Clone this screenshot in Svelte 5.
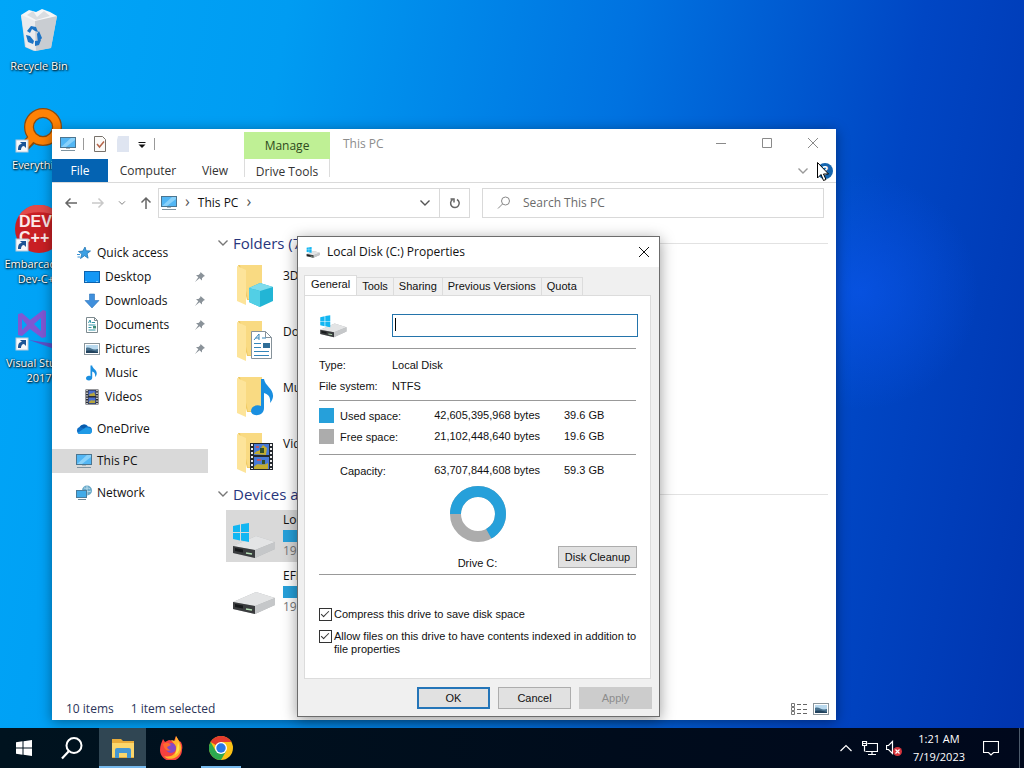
<script>
    const quickAccess = [
        { label: 'Desktop', icon: 'desktop', pinned: true },
        { label: 'Downloads', icon: 'download', pinned: true },
        { label: 'Documents', icon: 'document', pinned: true },
        { label: 'Pictures', icon: 'picture', pinned: true },
        { label: 'Music', icon: 'music', pinned: false },
        { label: 'Videos', icon: 'video', pinned: false }
    ];

    const places = [
        { label: 'OneDrive', icon: 'cloud' },
        { label: 'This PC', icon: 'pc', selected: true },
        { label: 'Network', icon: 'network' }
    ];

    const shortcuts = [
        { label: 'Recycle Bin', icon: 'bin' },
        { label: 'Everything', icon: 'everything', link: true },
        { label: 'Embarcadero Dev-C++', icon: 'devcpp', link: true },
        { label: 'Visual Studio 2017', icon: 'vs', link: true }
    ];

    const folders = [
        { label: '3D Objects', icon: 'cube' },
        { label: 'Documents', icon: 'document' },
        { label: 'Music', icon: 'music' },
        { label: 'Videos', icon: 'video' }
    ];

    const drives = [
        { label: 'Local Disk (C:)', free: '19.6 GB free of 59.3 GB', used: 67, system: true, selected: true },
        { label: 'EFI (D:)', free: '19.6 MB free of 95.9 MB', used: 80 }
    ];

    const tabs = ['General', 'Tools', 'Sharing', 'Previous Versions', 'Quota'];

    let volumeName = '';
    let compress = true;
    let indexed = true;
    let search = '';
</script>

{#snippet glyph(name)}
    <svg class="glyph" viewBox="0 0 16 16" aria-hidden="true">
        {#if name === 'desktop'}
            <rect x="0.5" y="2.5" width="15" height="11" fill="#1497f5" stroke="#0c62ae" />
            <path d="M1 12.500h14" stroke="#7cc8fb" stroke-dasharray="2 9" />
        {:else if name === 'download'}
            <path d="M5.500 1h5v6.500H15L8 15 1 7.500h4.500z" fill="#3f8fdc" stroke="#2b73bb" stroke-width=".6" />
        {:else if name === 'document'}
            <path d="M2.500.5h8l3 3v12h-11z" fill="#fff" stroke="#7d8a8f" />
            <path d="M10.500.5v3h3" fill="none" stroke="#7d8a8f" />
            <path d="M4.500 6l1.500-3 1 3M8 5.500h3M4.500 8h7M4.500 10.500h3M4.500 13h7" fill="none" stroke="#2f93a5" />
            <rect x="9" y="9" width="3" height="2.500" fill="#3a8b76" />
        {:else if name === 'picture'}
            <rect x="0.5" y="2.500" width="15" height="11" fill="#fff" stroke="#8b969c" />
            <path d="M2 4h12v8H2z" fill="#b9d9ee" />
            <path d="M2 7c4-2 6 3 12 1v4H2z" fill="#47708d" />
            <path d="M2 10c4-1 8 0 12 1v1H2z" fill="#22435e" />
        {:else if name === 'music'}
            <path d="M6.500.5h1.700c.3 3.500 5 4 4.500 8.500-.2 1.500-1 2.500-1.700 3 .7-3-.8-5-2.800-5.500v6.200c0 3.500-6.200 3.500-6.200.5 0-2 2.500-3 4.500-2z" fill="#1a8fe0" />
        {:else if name === 'video'}
            <path d="M1.500.5h13v15h-13z" fill="#2a2d33" />
            <path d="M3 1v14M13 1v14" stroke="#e8e8e8" stroke-width="1.500" stroke-dasharray="1.300 1.300" />
            <path d="M4.500 1.500h7v5.500h-7zM4.500 8.500h7v6h-7z" fill="#4a6fd0" />
            <path d="M5 6c2-3 3 0 5-3l1.500 4h-6zM5 13c3-4 4 0 6-2v3H5z" fill="#b6a53a" />
        {:else if name === 'cloud'}
            <path d="M4 13a3.600 3.600 0 0 1-.5-7A5 5 0 0 1 12 5.500a3.800 3.800 0 0 1 1 7.500z" fill="#0f6fc6" />
            <path d="M1.500 12l8-5.500c3-.5 6.500 1 6.500 3.500 0 2-1.500 3-3 3H4c-1 0-2-.5-2.500-1z" fill="#1f9ae6" />
            <path d="M4 6q3-4 7-1l-3 2.500z" fill="#0a5aa8" />
        {:else if name === 'pc'}
            <rect x="0.5" y="1.500" width="15" height="10" fill="#52b6f4" stroke="#4b7590" />
            <path d="M1 11L11 2h4v2L6 11z" fill="#89d1fa" />
            <path d="M1 14.500h14" stroke="#7f939f" />
            <path d="M6 12.500h4" stroke="#a8b8c0" />
        {:else if name === 'network'}
            <circle cx="11" cy="5.500" r="5" fill="#6aa9c9" />
            <path d="M8 3c2 1 4-1 6 1M8 7c2-2 4 1 7-1M11 1v9" stroke="#b9dcec" fill="none" />
            <rect x="0.500" y="5.500" width="10" height="7" fill="#42abe8" stroke="#4a7c9b" />
            <path d="M2 14.500h8" stroke="#6f8794" />
        {:else if name === 'star'}
            <path d="M9 2l1.200 3.800 4.300.2-3.400 2.700 1 4.500-3.600-2.500L4.500 13.500l1.300-4.400L2.500 6.500l4.300-.4z" fill="#3da0e4" stroke="#2276b4" stroke-width=".8" />
            <path d="M1 9.500h3M1.500 12h2.500" stroke="#3b94d6" />
        {/if}
    </svg>
{/snippet}

{#snippet pin()}
    <svg class="pin" viewBox="0 0 12 12" aria-hidden="true">
        <path d="M6.500 1l4.500 4-1.300.5-1.700 1.700v2.300L5.500 7.300 1 11l3.300-4.800L2 4h2.500L6.300 2.300z" fill="#8a9299" />
    </svg>
{/snippet}

{#snippet drive(system)}
    <svg class="drive-icon" viewBox="0 0 48 40" aria-hidden="true">
        <path d="M2 25L25 15l19 6v7L24 37 2 32z" fill="#b3b5b7" />
        <path d="M2 25l23-10 19 6-20 8z" fill="#e3e4e5" />
        <path d="M24 29l20-8v7l-20 9z" fill="#c5c7c9" />
        <path d="M2 25l22 4v8L2 32z" fill="#3a3c3e" />
        <path d="M4 27l8 1.500v3L4 30z" fill="#17191b" />
        <path d="M15 32l6 1" stroke="#b5dfb5" stroke-width="1.500" />
        {#if system}
            <path d="M2 5l7-1.500V11H2zM10 3.300L18 2v9h-8zM2 12h7v7.500L2 18zM10 12h8v9l-8-1.400z" fill="#12b6f2" />
        {/if}
    </svg>
{/snippet}

{#snippet chevron()}
    <svg class="chevron" viewBox="0 0 12 12" aria-hidden="true">
        <path d="M1.500 3.500L6 8l4.500-4.500" fill="none" stroke="currentColor" stroke-width="1.400" />
    </svg>
{/snippet}

<div class="screen">
    <main class="desktop">
        <ul class="shortcuts">
            {#each shortcuts as item}
                <li>
                    <svg class="shortcut-icon" viewBox="0 0 48 48" aria-hidden="true">
                        {#if item.icon === 'bin'}
                            <path d="M6 8l36 1-6 32-17 3-9-4z" fill="#d5d8dc" />
                            <path d="M6 8l14 5 1 31-10-4z" fill="#e9ebee" />
                            <path d="M20 13l22-4-6 32-15 3z" fill="#c9cdd2" />
                            <path d="M6 8l8-5 7 2 6-3 8 3 7 4-22 5z" fill="#f5f6f7" />
                            <path d="M12 8l6-4 4 6 7-6 6 5-14 4z" fill="#d9dde1" />
                            <path d="M12 24l4-5 5 1 2 5-3-1-3-2-2 4zM22 27l2-3 3 7-4 5zM11 28l4 1 4 5-1 3-5-2zM20 34l6-1-2 5-4 1z" fill="#1c74c5" />
                        {:else if item.icon === 'everything'}
                            <path d="M19 31L9 41" stroke="#8c4a0c" stroke-width="10" />
                            <circle cx="28" cy="21" r="14" fill="none" stroke="#8c4a0c" stroke-width="10" />
                            <circle cx="28" cy="21" r="14" fill="none" stroke="#ff8205" stroke-width="7.500" />
                            <path d="M19 30L9 41" stroke="#ff8205" stroke-width="7" />
                        {:else if item.icon === 'devcpp'}
                            <circle cx="24" cy="24" r="24" fill="#c91f24" />
                            <path d="M3 12a24 24 0 0 1 42 0 50 50 0 0 0-42 0z" fill="#e14a4a" />
                            <text x="4" y="22" class="dev-text">DEV</text>
                            <text x="4" y="38" class="dev-text">C++</text>
                        {:else}
                            <path d="M3 10l4-1 8 7L28 6l3 1v26l-4 1-12-9-8 7-4-1zM26 14l-7 6 7 7zM7 15v11l5-5z" fill="#7f58d2" fill-rule="evenodd" />
                            <path d="M14 36l34 5v7z" fill="#5b50c8" />
                        {/if}
                        {#if item.link}
                            <rect x="1" y="34" width="12" height="12" fill="#f7f9fb" stroke="#b8c8d8" />
                            <path d="M3 44c0-4 1-6 4-6l-2-2h6v6l-2-2c-2 0-3 2-3 4z" fill="#1c5596" />
                        {/if}
                    </svg>
                    <span>{item.label}</span>
                </li>
            {/each}
        </ul>

        <section class="window explorer" aria-label="This PC">
            <header class="titlebar">
                <div class="quick-tools">
                    {@render glyph('pc')}
                    <i></i>
                    <svg class="glyph" viewBox="0 0 16 16" aria-hidden="true">
                        <path d="M3.500.5h8l3 3v12h-11z" fill="#fbfaf8" stroke="#77716b" />
                        <path d="M6 8l2.500 3L13 5.500" fill="none" stroke="#b5654a" stroke-width="1.500" />
                    </svg>
                    <svg class="glyph" viewBox="0 0 16 16" aria-hidden="true">
                        <path d="M4 0h11v16H3V4z" fill="#dfe5f1" />
                    </svg>
                    <svg class="glyph small" viewBox="0 0 10 10" aria-hidden="true">
                        <path d="M1.500 3.500h7" stroke="#111" />
                        <path d="M1.500 5.500h7L5 9z" fill="#111" />
                    </svg>
                    <i></i>
                </div>
                <div class="manage">Manage</div>
                <h1>This PC</h1>
                <div class="window-buttons">
                    <button aria-label="Minimize"><svg viewBox="0 0 12 12"><path d="M1 6.500h10" /></svg></button>
                    <button aria-label="Maximize"><svg viewBox="0 0 12 12"><path d="M1.500 1.500h9v9h-9z" /></svg></button>
                    <button aria-label="Close"><svg viewBox="0 0 12 12"><path d="M1 1l10 10M11 1L1 11" /></svg></button>
                </div>
            </header>

            <nav class="ribbon">
                <button class="file">File</button>
                <button class="computer">Computer</button>
                <button class="view">View</button>
                <button class="drive-tools">Drive Tools</button>
                <span class="ribbon-end">
                    {@render chevron()}
                    <button class="help" aria-label="Help">?</button>
                </span>
            </nav>

            <div class="navbar">
                <div class="history">
                    <button aria-label="Back"><svg viewBox="0 0 14 14"><path d="M13 7H2M6.500 2.500L2 7l4.500 4.500" /></svg></button>
                    <button aria-label="Forward" disabled><svg viewBox="0 0 14 14"><path d="M1 7h11M7.500 2.500L12 7l-4.500 4.500" /></svg></button>
                    <button class="recent" aria-label="Recent locations">{@render chevron()}</button>
                    <button aria-label="Up"><svg viewBox="0 0 14 14"><path d="M7 13V2M2.500 6.500L7 2l4.500 4.500" /></svg></button>
                </div>
                <div class="address">
                    {@render glyph('pc')}
                    <span class="crumb">›</span>
                    <span>This PC</span>
                    <span class="crumb">›</span>
                    <button class="drop" aria-label="Previous locations">{@render chevron()}</button>
                    <button class="refresh" aria-label="Refresh">
                        <svg viewBox="0 0 14 14"><path d="M9 3.500a4.300 4.300 0 1 1-4.500.2M2.500 3h3.500v3.500" /></svg>
                    </button>
                </div>
                <label class="search">
                    <svg viewBox="0 0 14 14" aria-hidden="true"><circle cx="8.500" cy="5" r="4" /><path d="M5.500 8L1 12.500" /></svg>
                    <input type="search" placeholder="Search This PC" aria-label="Search This PC" bind:value={search} />
                </label>
            </div>

            <div class="browser">
                <ul class="tree">
                    <li>{@render glyph('star')}<span>Quick access</span></li>
                    {#each quickAccess as item}
                        <li class="child">
                            {@render glyph(item.icon)}
                            <span>{item.label}</span>
                            {#if item.pinned}{@render pin()}{/if}
                        </li>
                    {/each}
                    {#each places as item}
                        <li class="place" class:selected={item.selected}>
                            {@render glyph(item.icon)}
                            <span>{item.label}</span>
                        </li>
                    {/each}
                </ul>

                <div class="files">
                    <h2>{@render chevron()}<span>Folders (7)</span></h2>
                    <ul class="tiles">
                        {#each folders as item}
                            <li>
                                <svg class="folder-icon" viewBox="0 0 48 48" aria-hidden="true">
                                    <path d="M7 3h24v35H16z" fill="#f0ca62" />
                                    <path d="M9 3h22v34H17z" fill="#f9da82" />
                                    <path d="M6 4l9 4v35l-9-4z" fill="#fde49a" />
                                    {#if item.icon === 'cube'}
                                        <path d="M18 26l11-5 13 4v14l-13 6-11-5z" fill="#22b5d5" />
                                        <path d="M18 26l11-5 13 4-13 4z" fill="#7fdcec" />
                                        <path d="M18 26l11 3v16l-11-5z" fill="#52cfe5" />
                                    {:else if item.icon === 'document'}
                                        <path d="M20.500 13.500h14l6 6v21h-20z" fill="#fff" stroke="#86929a" />
                                        <path d="M34.500 13.500v6h6" fill="none" stroke="#86929a" />
                                        <path d="M23 22l5-6v6M24.500 20H28M31 20h4M23 25.500h7M23 29.500h7M23 33.500h15M23 37.500h15" fill="none" stroke="#3485b8" />
                                        <path d="M32 25h7v5h-7z" fill="#2f6d97" />
                                    {:else if item.icon === 'music'}
                                        <path d="M30 5h3c1 7 10 10 9 18-.5 3-2 5-3 6 1-6-2-9-6-10v15c0 9-13 9-13 3 0-5 6-7 10-5z" fill="#1a8fe0" />
                                    {:else}
                                        <path d="M19 13h23v27H19z" fill="#24282e" />
                                        <path d="M21 14v25M40 14v25" stroke="#eee" stroke-width="2" stroke-dasharray="2 2" />
                                        <path d="M23 14h15v11H23zM23 27h15v12H23z" fill="#4779d8" />
                                        <path d="M23 24c3-5 5-1 7-6l2-3 4 3-1 7zM23 37c4-6 8 0 14-4v6H23z" fill="#c2ab2e" />
                                        <path d="M29 18h4v5h-4zM31 30h3v4h-3z" fill="#33502a" />
                                        <path d="M25 16h3v2h-3zM26 29h4v2h-4z" fill="#b9586a" />
                                    {/if}
                                </svg>
                                <span>{item.label}</span>
                            </li>
                        {/each}
                    </ul>
                    <h2>{@render chevron()}<span>Devices and drives (3)</span></h2>
                    <ul class="tiles drives">
                        {#each drives as item}
                            <li class:selected={item.selected}>
                                {@render drive(item.system)}
                                <div class="drive-info">
                                    <span>{item.label}</span>
                                    <div class="meter"><div style="width: {item.used}%"></div></div>
                                    <small>{item.free}</small>
                                </div>
                            </li>
                        {/each}
                    </ul>
                </div>
            </div>

            <footer class="status">
                <span>10 items</span>
                <span>1 item selected</span>
                <div class="views">
                    <svg class="glyph" viewBox="0 0 16 16" aria-hidden="true">
                        <path d="M.5 2.500h3v3h-3zM.5 6.500h3v3h-3zM.5 10.500h3v3h-3z" fill="none" stroke="#777" />
                        <path d="M6 3.500h10M6 8.500h10M6 12.500h10" stroke="#666" stroke-dasharray="4 2" />
                    </svg>
                    {@render glyph('picture')}
                </div>
            </footer>
        </section>

        <section class="window dialog" role="dialog" aria-label="Local Disk (C:) Properties">
            <header>
                {@render drive(true)}
                <h1>Local Disk (C:) Properties</h1>
                <button aria-label="Close"><svg viewBox="0 0 12 12"><path d="M1 1l10 10M11 1L1 11" /></svg></button>
            </header>

            <div class="tabs" role="tablist">
                {#each tabs as tab, i}
                    <button role="tab" aria-selected={i === 0} class:active={i === 0}>{tab}</button>
                {/each}
            </div>

            <div class="panel">
                <div class="volume">
                    {@render drive(true)}
                    <div class="volume-box">
                        <input type="text" aria-label="Volume name" bind:value={volumeName} />
                        <span class="caret"></span>
                    </div>
                </div>

                <dl>
                    <dt>Type:</dt>
                    <dd>Local Disk</dd>
                    <dt>File system:</dt>
                    <dd>NTFS</dd>
                </dl>

                <table>
                    <tbody>
                        <tr>
                            <th scope="row"><i class="swatch used"></i>Used space:</th>
                            <td class="bytes">42,605,395,968 bytes</td>
                            <td>39.6 GB</td>
                        </tr>
                        <tr>
                            <th scope="row"><i class="swatch"></i>Free space:</th>
                            <td class="bytes">21,102,448,640 bytes</td>
                            <td>19.6 GB</td>
                        </tr>
                    </tbody>
                    <tbody class="total">
                        <tr>
                            <th scope="row"><i class="swatch none"></i>Capacity:</th>
                            <td class="bytes">63,707,844,608 bytes</td>
                            <td>59.3 GB</td>
                        </tr>
                    </tbody>
                </table>

                <div class="usage">
                    <figure>
                        <svg viewBox="0 0 56 56" aria-hidden="true">
                            <circle cx="28" cy="28" r="22.500" fill="none" stroke="#acacac" stroke-width="11" />
                            <circle
                                cx="28"
                                cy="28"
                                r="22.500"
                                fill="none"
                                stroke="#26a0da"
                                stroke-width="11"
                                pathLength="100"
                                stroke-dasharray="67 33"
                                transform="rotate(180 28 28)"
                            />
                        </svg>
                        <figcaption>Drive C:</figcaption>
                    </figure>
                    <button class="push">Disk Cleanup</button>
                </div>

                <div class="options">
                    <label><input type="checkbox" bind:checked={compress} /><span>Compress this drive to save disk space</span></label>
                    <label><input type="checkbox" bind:checked={indexed} /><span>Allow files on this drive to have contents indexed in addition to file properties</span></label>
                </div>
            </div>

            <div class="actions">
                <button class="push default">OK</button>
                <button class="push">Cancel</button>
                <button class="push" disabled>Apply</button>
            </div>
        </section>

        <svg class="cursor" viewBox="0 0 12 19" aria-hidden="true">
            <path d="M.5.5v15.500l3.500-3.500 2.500 6 2.500-1-2.500-5.500h5z" fill="#fff" stroke="#000" />
        </svg>
    </main>

    <footer class="taskbar">
        <button aria-label="Start">
            <svg viewBox="0 0 16 16"><path d="M0 2.200l6.500-.9v6.200H0zM7.500 1.200L16 0v7.500H7.500zM0 8.500h6.500v6.200L0 13.800zM7.500 8.500H16V16l-8.500-1.200z" fill="#fff" /></svg>
        </button>
        <button class="find" aria-label="Search">
            <svg viewBox="0 0 24 24"><circle cx="14" cy="9.500" r="7.500" fill="none" stroke="#fff" stroke-width="2" /><path d="M9 15l-7 7.500" stroke="#fff" stroke-width="2.200" /></svg>
        </button>
        <button class="app active" aria-label="File Explorer">
            <svg viewBox="0 0 24 24">
                <path d="M1 3h9l2 2h11v17H1z" fill="#e9ac3a" />
                <path d="M1 7h22v14H1z" fill="#fbd66b" />
                <path d="M4 22v-8q0-2 2-2h12q2 0 2 2v8h-4v-5H8v5z" fill="#4596d2" />
            </svg>
        </button>
        <button class="app" aria-label="Firefox">
            <svg viewBox="0 0 24 24">
                <path d="M2 8l2-5 2 3 4-2 5 1 2-5 3 5 2 1q2 4 1 8a11 11 0 0 1-22 0q0-3 1-6z" fill="#f6423f" />
                <path d="M12 4l4 1 1-5 3 5q4 6 1 12c-3 6-12 8-16 3 7 2 12-2 12-7 0-4-2-5-5-9z" fill="#ffb52c" />
                <path d="M19 6q4 9-3 13l2-7z" fill="#ffe04a" />
                <circle cx="12" cy="12" r="5" fill="#8249c8" />
                <path d="M4 8q5-3 8 1l-4 2q1 3 4 3-6 3-8-6z" fill="#ff6a2e" />
            </svg>
        </button>
        <button class="app open" aria-label="Chrome">
            <svg viewBox="0 0 24 24">
                <circle cx="12" cy="12" r="12" fill="#fbc116" />
                <path d="M12 12L1.600 6A12 12 0 0 1 22.400 6H12z" fill="#e33b2e" />
                <path d="M1.600 6A12 12 0 0 0 12 24l5.200-9L12 12 6.800 15z" fill="#2da94f" />
                <circle cx="12" cy="12" r="6" fill="#fff" />
                <circle cx="12" cy="12" r="4.700" fill="#2878e6" />
            </svg>
        </button>
        <div class="tray">
            <svg class="tray-icon" viewBox="0 0 16 16" aria-hidden="true"><path d="M2.500 11L8 5.500l5.500 5.500" /></svg>
            <svg class="tray-icon" viewBox="0 0 16 16" aria-hidden="true"><path d="M5.500 3.500h10v8H3.500M10 11.500v3M6 14.500h8M.5 1.500h4v4h-4zM2.500 5.500v6M1 3.500h3" /></svg>
            <svg class="tray-icon" viewBox="0 0 16 16" aria-hidden="true">
                <path d="M.5 5.500h2l4-4v12l-4-4h-2z" />
                <circle cx="11.500" cy="11.500" r="4.500" class="mute" />
                <path d="M9.500 9.500l4 4M13.500 9.500l-4 4" />
            </svg>
            <div class="clock"><time>1:21 AM</time><time>7/19/2023</time></div>
            <svg class="tray-icon" viewBox="0 0 16 16" aria-hidden="true"><path d="M.5 1.500h15v11h-5L8 15l-2.500-2.500h-5z" /></svg>
            <button class="show-desktop" aria-label="Show desktop"></button>
        </div>
    </footer>
</div>

<style>
    :global(body) {
        margin: 0;
    }

    .screen {
        min-height: 100vh;
        display: flex;
        flex-direction: column;
        font-family: 'Open Sans', 'Noto Sans', sans-serif;
        font-size: 12px;
        line-height: 16px;
        color: #111;
        background:
            radial-gradient(circle at 84% 38%, rgba(10, 85, 234, 0.7) 0, transparent 12%),
            linear-gradient(100deg, #00a6f8 0%, #009cf2 25%, #0072e0 55%, #0046c4 80%, #0034ae 100%);
    }

    button,
    input {
        font: inherit;
        color: inherit;
        margin: 0;
        padding: 0;
        border: 0;
        background: none;
        box-sizing: border-box;
    }

    ul,
    dl,
    dd,
    h1,
    h2,
    figure {
        margin: 0;
        padding: 0;
        list-style: none;
        font-weight: 400;
    }

    h1 {
        font-size: 12px;
    }

    svg {
        display: block;
        flex: none;
    }

    .desktop {
        flex: 1;
        position: relative;
        overflow: hidden;
    }

    .shortcuts {
        width: 78px;
        padding-top: 7px;
    }

    .shortcuts li {
        height: 99px;
        display: flex;
        flex-direction: column;
        align-items: center;
        gap: 3px;
        font-size: 11px;
        line-height: 15px;
        color: #fff;
        text-align: center;
        text-shadow: 1px 1px 2px #000, 0 0 2px #000;
    }

    .shortcut-icon {
        width: 48px;
        height: 48px;
    }

    .dev-text {
        font: 700 16px 'Liberation Sans', sans-serif;
        fill: #fbeaea;
        text-shadow: none;
    }

    .glyph {
        width: 16px;
        height: 16px;
    }

    .small {
        width: 10px;
        height: 10px;
    }

    .chevron {
        width: 12px;
        height: 12px;
    }

    .window {
        position: absolute;
        display: flex;
        flex-direction: column;
        box-sizing: border-box;
    }

    .explorer {
        inset: 129px 188px 8px 52px;
        background: #fff;
        box-shadow: 0 2px 12px rgba(0, 0, 0, 0.4);
    }

    .titlebar {
        display: flex;
        height: 30px;
        color: #8c8c8c;
    }

    .quick-tools {
        width: 192px;
        display: flex;
        align-items: center;
        gap: 7px;
        padding-left: 8px;
        box-sizing: border-box;
    }

    .quick-tools i {
        width: 1px;
        height: 12px;
        background: #999;
    }

    .manage {
        width: 86px;
        margin-top: 3px;
        line-height: 28px;
        text-align: center;
        color: #2f4a20;
        background: #bff095;
    }

    .titlebar h1 {
        flex: 1;
        padding-left: 13px;
        line-height: 30px;
    }

    .window-buttons {
        display: flex;
    }

    .window-buttons button {
        width: 46px;
        height: 28px;
    }

    .window-buttons svg {
        width: 12px;
        height: 12px;
        margin: auto;
        fill: none;
        stroke: #8a8a8a;
    }

    .ribbon {
        display: flex;
        height: 23px;
        border-bottom: 1px solid #dadada;
        color: #333;
    }

    .file {
        width: 56px;
        background: #0463b2;
        color: #fff;
    }

    .computer {
        width: 80px;
    }

    .view {
        width: 54px;
        margin-right: 2px;
    }

    .drive-tools {
        width: 86px;
        height: 18px;
        padding-top: 6px;
        border: solid #dcdcdc;
        border-width: 0 1px;
        line-height: 14px;
    }

    .ribbon-end {
        margin-left: auto;
        display: flex;
        align-items: center;
        gap: 8px;
        padding-right: 3px;
        color: #999;
    }

    .help {
        width: 16px;
        height: 16px;
        border-radius: 50%;
        background: #1565ae;
        color: #fff;
        font-weight: 700;
        line-height: 16px;
    }

    .navbar {
        display: flex;
        gap: 12px;
        padding: 5px 12px;
    }

    .history {
        width: 94px;
        margin-right: -12px;
        display: flex;
        align-items: center;
        gap: 13px;
        color: #777;
    }

    .history svg,
    .refresh svg,
    .search svg {
        width: 14px;
        height: 14px;
        fill: none;
        stroke: #666;
        stroke-width: 1.5;
    }

    .history button:disabled {
        opacity: 0.35;
    }

    .history .recent svg {
        width: 8px;
        height: 8px;
    }

    .address {
        flex: 308;
        display: flex;
        align-items: center;
        gap: 6px;
        height: 30px;
        box-sizing: border-box;
        border: 1px solid #d9d9d9;
        padding-left: 2px;
    }

    .crumb {
        font-size: 16px;
        line-height: 14px;
        padding: 0 2px 4px;
        color: #555;
    }

    .drop {
        margin-left: auto;
        padding: 8px 2px;
        color: #555;
    }

    .refresh {
        height: 28px;
        width: 30px;
        border-left: 1px solid #d9d9d9;
    }

    .refresh svg {
        margin: auto;
    }

    .search {
        flex: 326;
        display: flex;
        align-items: center;
        gap: 12px;
        padding-left: 14px;
        border: 1px solid #d9d9d9;
    }

    .search svg {
        stroke: #888;
        stroke-width: 1;
    }

    .search input {
        flex: 1;
        outline: none;
    }

    .search input::placeholder {
        color: #6b6b6b;
        opacity: 1;
    }

    .browser {
        flex: 1;
        display: flex;
        padding-top: 18px;
    }

    .tree {
        width: 156px;
    }

    .tree li {
        height: 24px;
        display: flex;
        align-items: center;
        gap: 5px;
        padding: 0 2px 0 24px;
    }

    .tree .child {
        padding-left: 32px;
    }

    .tree .place {
        margin-top: 8px;
    }

    .pin {
        width: 12px;
        height: 12px;
        margin-left: auto;
    }

    .selected {
        background: #d9d9d9;
    }

    .files {
        flex: 1;
        padding: 0 8px 0 9px;
    }

    .files h2 {
        display: flex;
        align-items: center;
        gap: 4px;
        height: 20px;
        margin-top: -8px;
        font-size: 15px;
        color: #27357c;
    }

    .files h2::after {
        content: '';
        flex: 1;
        height: 1px;
        margin-left: 6px;
        background: #e2e2e2;
    }

    .files h2 .chevron {
        color: #777;
    }

    .tiles {
        display: grid;
        gap: 4px;
        padding: 8px 0 7px 9px;
    }

    .tiles li {
        width: 250px;
        height: 52px;
        display: flex;
        gap: 4px;
        padding-left: 5px;
        box-sizing: border-box;
    }

    .tiles li > span {
        padding-top: 7px;
    }

    .tiles + h2 {
        margin-top: -4px;
    }

    .tiles.drives {
        padding-top: 6px;
    }

    .folder-icon {
        width: 48px;
        height: 48px;
        margin-top: 1px;
    }

    .drive-icon {
        width: 48px;
        height: 40px;
        margin-top: 11px;
    }

    .drive-info {
        flex: 1;
        padding-top: 2px;
    }

    .drive-info > span,
    .drive-info small {
        display: block;
        font-size: 12px;
    }

    .drive-info small {
        color: #777;
    }

    .meter {
        height: 12px;
        margin: 2px 0 1px;
        background: #e6e6e6;
    }

    .meter div {
        height: 100%;
        background: #26a0da;
    }

    .status {
        display: flex;
        align-items: center;
        gap: 17px;
        height: 22px;
        padding: 0 7px 0 14px;
        color: #2b3459;
    }

    .views {
        margin-left: auto;
        display: flex;
        gap: 6px;
    }

    .dialog {
        left: 297px;
        top: 236px;
        width: 363px;
        border: 1px solid #6c6c6c;
        background: #f0f0f0;
        box-shadow: 0 3px 14px rgba(0, 0, 0, 0.4);
        font: 11px/13px 'Liberation Sans', sans-serif;
    }

    .dialog header {
        display: flex;
        align-items: center;
        gap: 6px;
        height: 30px;
        padding-left: 8px;
        background: #fff;
        font: 12px/16px 'Open Sans', 'Noto Sans', sans-serif;
    }

    .dialog header .drive-icon {
        width: 15px;
        height: 13px;
        margin: 0;
    }

    .dialog header button {
        width: 30px;
        height: 30px;
        margin-left: auto;
    }

    .dialog header button svg {
        width: 12px;
        height: 12px;
        margin: auto;
        fill: none;
        stroke: #111;
    }

    .tabs {
        display: flex;
        align-items: flex-end;
        padding: 8px 6px 0;
    }

    .tabs button {
        height: 18px;
        padding: 0 5px;
        border: 1px solid #dcdcdc;
        border-bottom: 0;
        border-left-width: 0;
    }

    .tabs .active {
        height: 21px;
        padding: 0 6px 4px;
        border-left-width: 1px;
        background: #fff;
        margin-bottom: -1px;
    }

    .panel {
        margin: 0 8px 0 6px;
        padding: 18px 14px 22px;
        border: 1px solid #dcdcdc;
        background: #fff;
    }

    .volume {
        display: flex;
        justify-content: space-between;
        margin-right: -2px;
        padding-bottom: 9px;
    }

    .volume .drive-icon {
        width: 30px;
        height: 25px;
        margin: 0;
    }

    .volume-box {
        position: relative;
        width: 246px;
    }

    .volume-box input {
        width: 100%;
        height: 23px;
        padding: 0 4px;
        border: 1px solid #2474ab;
        background: #fff;
    }

    .caret {
        position: absolute;
        left: 3px;
        top: 4px;
        width: 1px;
        height: 13px;
        background: #000;
    }

    dl {
        display: grid;
        grid-template-columns: 73px 1fr;
        row-gap: 8px;
        padding: 10px 0 7px;
        border: solid #999;
        border-width: 1px 0;
    }

    table {
        width: 100%;
        border-collapse: collapse;
    }

    th,
    td {
        height: 21px;
        padding: 0;
        font-weight: 400;
        text-align: left;
    }

    tbody:first-child tr:first-child > * {
        padding-top: 4px;
    }

    tbody:first-child tr:last-child > * {
        padding-bottom: 7px;
    }

    .total th,
    .total td {
        padding-top: 5px;
        border-top: 1px solid #999;
    }

    th {
        width: 105px;
    }

    .bytes {
        width: 116px;
        padding-right: 24px;
        text-align: right;
    }

    .swatch {
        display: inline-block;
        width: 15px;
        height: 15px;
        margin-right: 6px;
        vertical-align: -3px;
        background: #acacac;
    }

    .swatch.used {
        background: #26a0da;
    }

    .swatch.none {
        background: none;
    }

    .usage {
        display: grid;
        grid-template-columns: 1fr 1fr;
        align-items: end;
        padding: 5px 0 4px;
        border-bottom: 1px solid #999;
    }

    figure {
        grid-column: 1 / 3;
        grid-row: 1;
        text-align: center;
    }

    figure svg {
        width: 56px;
        height: 56px;
        margin: 0 auto 15px;
    }

    .usage .push {
        grid-column: 2;
        grid-row: 1;
        justify-self: end;
        width: 79px;
        margin: 0 -1px 2px;
    }

    .push {
        width: 73px;
        height: 22px;
        border: 1px solid #adadad;
        background: #e1e1e1;
    }

    .push.default {
        border: 2px solid #2475b8;
    }

    .push:disabled {
        border-color: #ccc;
        background: #ccc;
        color: #8d8d8d;
    }

    .options {
        display: grid;
        gap: 9px;
        margin-right: -10px;
        padding-top: 33px;
    }

    .options label {
        display: flex;
        gap: 2px;
    }

    .options input {
        appearance: none;
        flex: none;
        width: 13px;
        height: 13px;
        border: 1px solid #333;
        background: #fff;
    }

    .options input:checked::after {
        content: '';
        display: block;
        width: 7px;
        height: 3px;
        margin: 2px 0 0 1px;
        border: solid #333;
        border-width: 0 0 1px 1px;
        transform: rotate(-45deg);
    }

    .actions {
        display: flex;
        justify-content: flex-end;
        gap: 8px;
        padding: 8px 7px 7px;
    }

    .cursor {
        position: absolute;
        left: 817px;
        top: 162px;
        width: 12px;
        height: 19px;
    }

    .taskbar {
        display: flex;
        height: 40px;
        background: linear-gradient(90deg, #00131f, #000c1c 60%, #00081c);
        color: #fff;
    }

    .taskbar > button {
        width: 48px;
        display: grid;
        place-items: center;
    }

    .taskbar > button svg {
        width: 16px;
        height: 16px;
    }

    .taskbar > button.find svg,
    .taskbar > button.app svg {
        width: 24px;
        height: 24px;
    }

    .taskbar > .app {
        margin-left: 1px;
        border-bottom: 2px solid transparent;
        border-top: 2px solid transparent;
    }

    .taskbar > .active {
        margin-left: 3px;
        width: 47px;
        background: #304653;
        border-top-color: #304653;
        border-bottom-color: #76b9ed;
    }

    .taskbar > .open {
        border-bottom-color: #76b9ed;
        width: 40px;
        margin-left: 6px;
    }

    .tray {
        margin-left: auto;
        display: flex;
        align-items: center;
        gap: 8px;
    }

    .tray-icon {
        width: 16px;
        height: 16px;
        fill: none;
        stroke: #fff;
        stroke-width: 1.2;
    }

    .tray-icon .mute {
        fill: #d6343c;
        stroke: none;
    }

    .clock {
        display: flex;
        flex-direction: column;
        align-items: center;
        margin: 0 10px 0 3px;
        font-size: 11px;
        line-height: 18px;
    }

    .show-desktop {
        height: 100%;
        width: 5px;
        margin-left: 12px;
        border-left: 1px solid #4d5b6b;
    }
</style>
